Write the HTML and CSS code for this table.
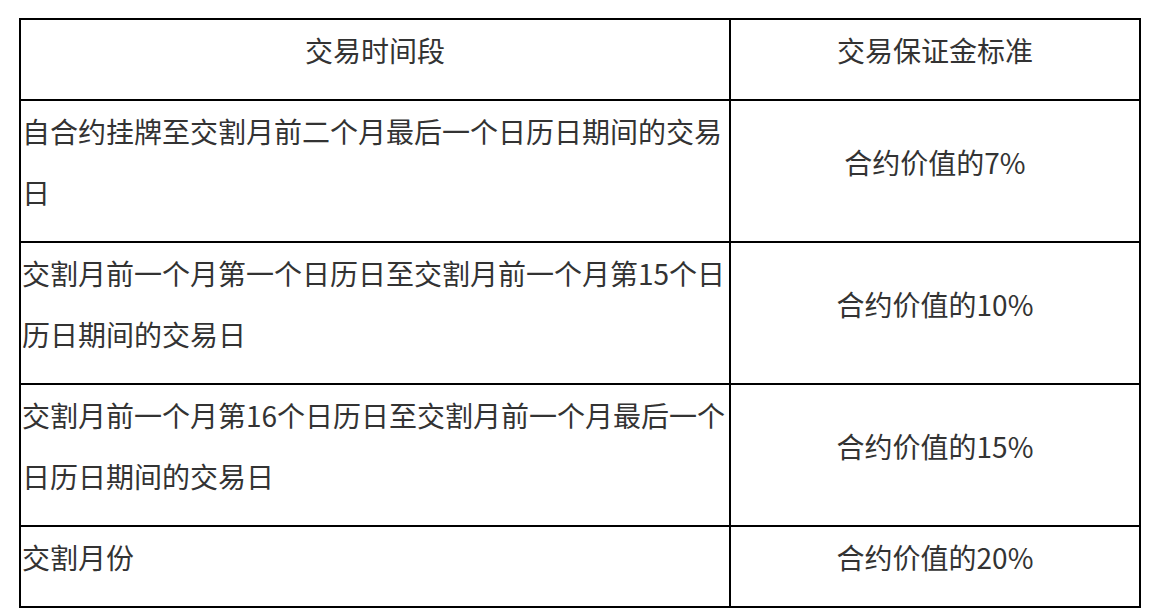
FILE: index.html
```html
<!DOCTYPE html>
<html lang="zh-CN">
<head>
<meta charset="utf-8">
<title>交易保证金标准</title>
<link rel="stylesheet" href="styles.css">
</head>
<body>
<table class="margin-table">
  <colgroup>
    <col class="col-period">
    <col class="col-rate">
  </colgroup>
  <thead>
    <tr>
      <th class="cell cell-center">交易时间段</th>
      <th class="cell cell-center">交易保证金标准</th>
    </tr>
  </thead>
  <tbody>
    <tr>
      <td class="cell">自合约挂牌至交割月前二个月最后一个日历日期间的交易日</td>
      <td class="cell cell-center">合约价值的7%</td>
    </tr>
    <tr>
      <td class="cell">交割月前一个月第一个日历日至交割月前一个月第15个日历日期间的交易日</td>
      <td class="cell cell-center">合约价值的10%</td>
    </tr>
    <tr>
      <td class="cell">交割月前一个月第16个日历日至交割月前一个月最后一个日历日期间的交易日</td>
      <td class="cell cell-center">合约价值的15%</td>
    </tr>
    <tr>
      <td class="cell">交割月份</td>
      <td class="cell cell-center">合约价值的20%</td>
    </tr>
  </tbody>
</table>
</body>
</html>
```

FILE: styles.css
```css
html, body {
  margin: 0;
  padding: 0;
  background: #ffffff;
}

body {
  padding: 18px 0 0 19px;
  font-family: "Noto Sans CJK SC", "Noto Sans", sans-serif;
  color: #333333;
}

.margin-table {
  border-collapse: collapse;
  table-layout: fixed;
  width: 1120px;
  font-size: 28px;
  line-height: 61px;
}

.col-period {
  width: 710px;
}

.col-rate {
  width: 410px;
}

.cell {
  border: 2px solid #000000;
  padding: 0 1px 18px 1px;
  vertical-align: middle;
  text-align: left;
  font-weight: normal;
}

.cell-center {
  text-align: center;
}
```
